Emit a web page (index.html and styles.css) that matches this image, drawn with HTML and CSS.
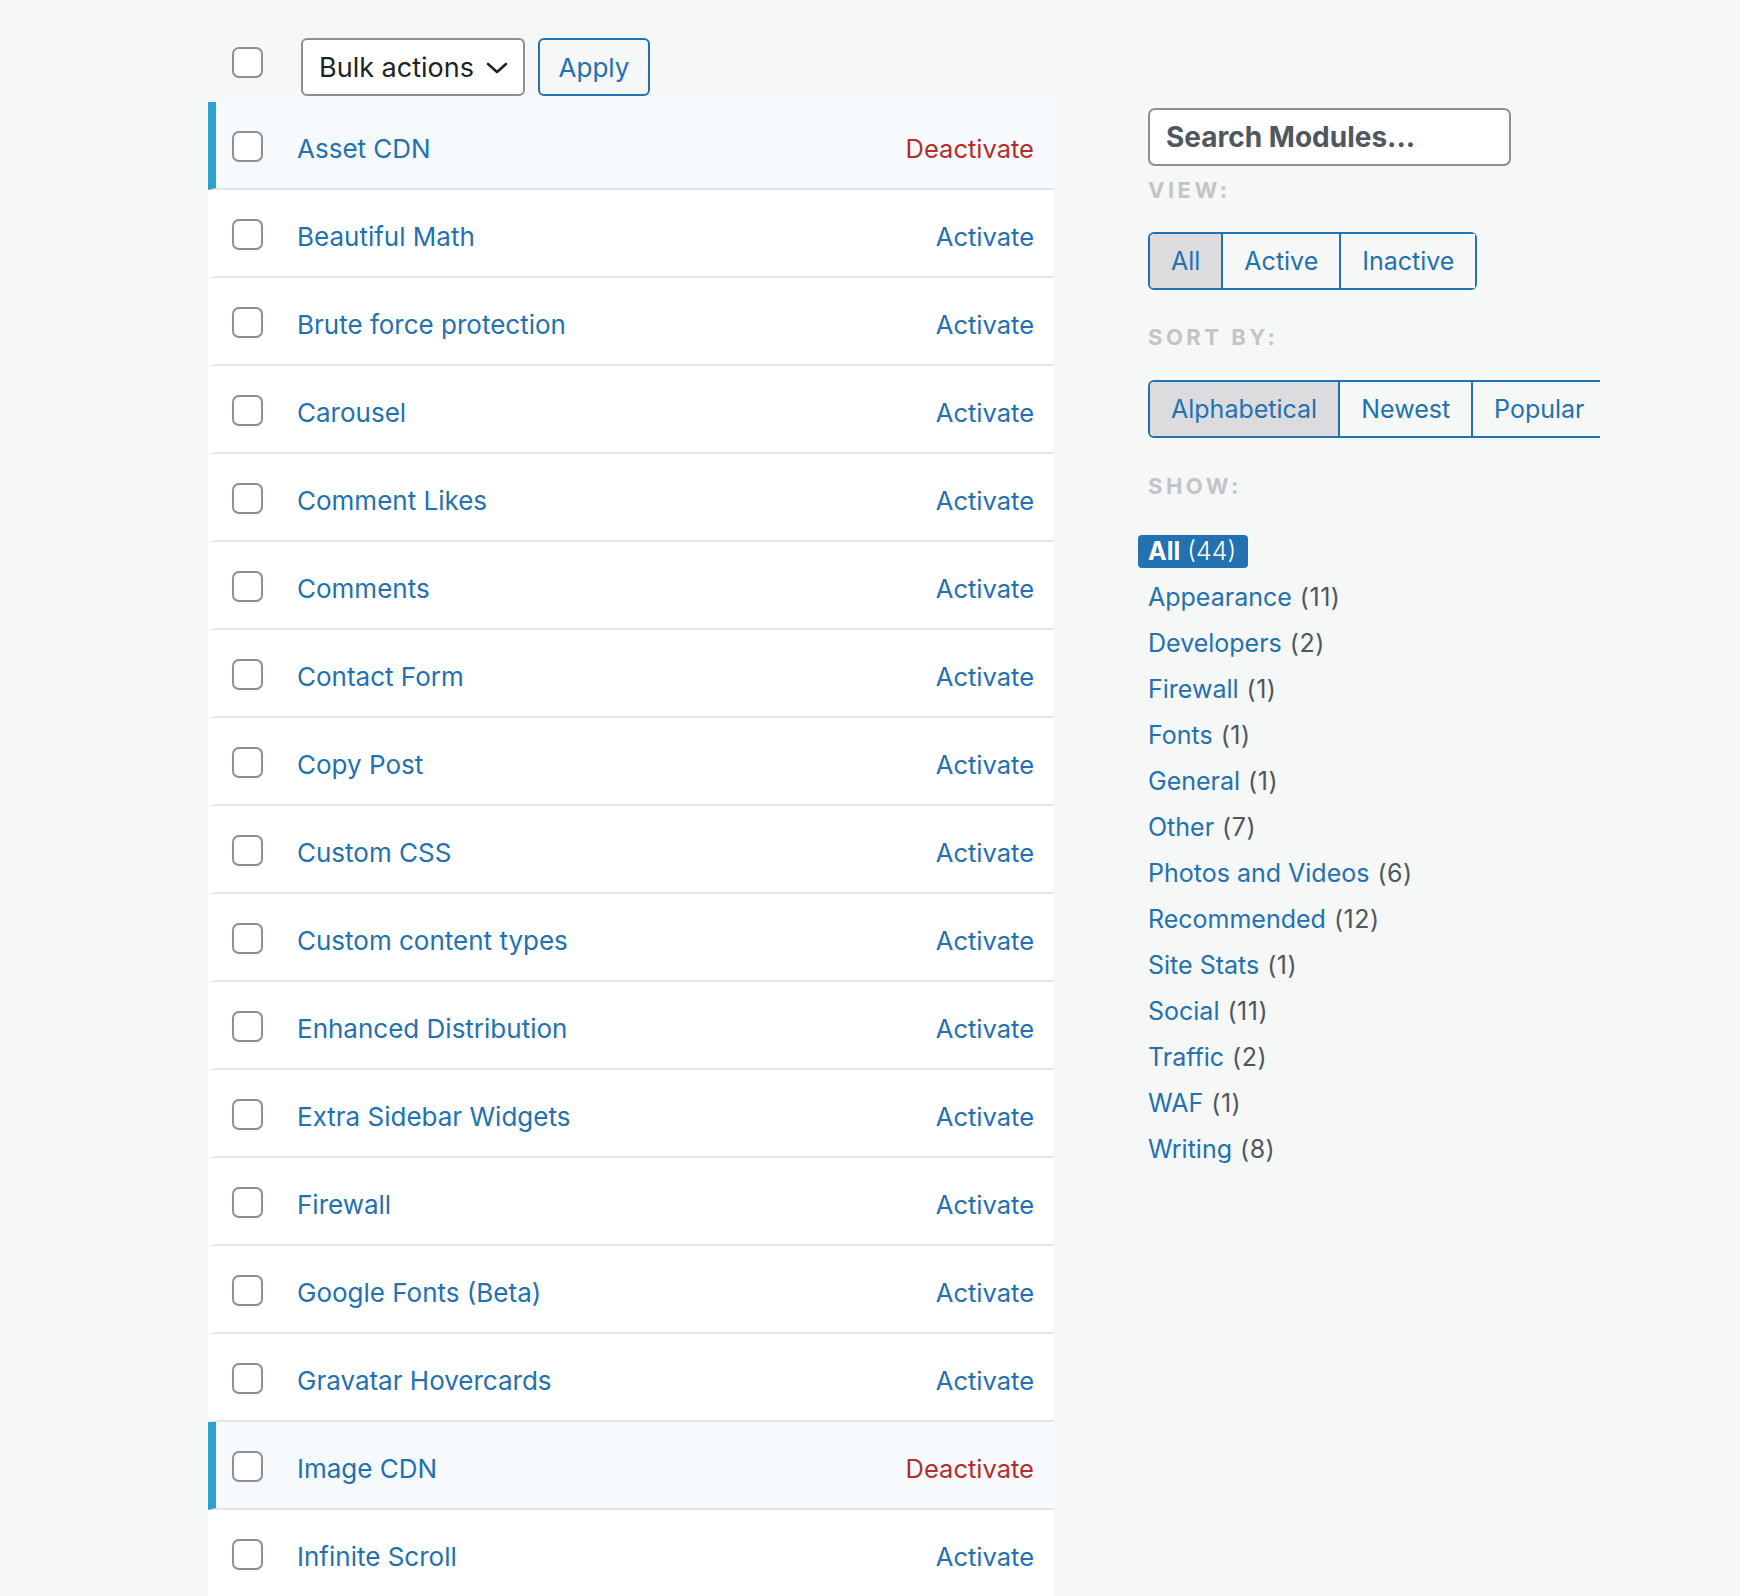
FILE: index.html
```html
<!DOCTYPE html>
<html lang="en">
<head>
<meta charset="utf-8">
<title>Modules</title>
<link rel="stylesheet" href="styles.css">
</head>
<body>
<div class="page">
  <div class="main">
    <div class="toolbar">
      <span class="cb cb-head"></span>
      <div class="select">
        <span>Bulk actions</span>
        <svg class="chev" width="22" height="12" viewBox="0 0 22 12"><path d="M2 2 L11 10 L20 2" fill="none" stroke="#1d2327" stroke-width="2.6" stroke-linecap="round" stroke-linejoin="round"/></svg>
      </div>
      <button class="btn-apply">Apply</button>
    </div>
    <div class="list">
      <div class="row active"><span class="cb"></span><a class="name">Asset CDN</a><a class="act deact">Deactivate</a></div>
      <div class="row"><span class="cb"></span><a class="name">Beautiful Math</a><a class="act">Activate</a></div>
      <div class="row"><span class="cb"></span><a class="name">Brute force protection</a><a class="act">Activate</a></div>
      <div class="row"><span class="cb"></span><a class="name">Carousel</a><a class="act">Activate</a></div>
      <div class="row"><span class="cb"></span><a class="name">Comment Likes</a><a class="act">Activate</a></div>
      <div class="row"><span class="cb"></span><a class="name">Comments</a><a class="act">Activate</a></div>
      <div class="row"><span class="cb"></span><a class="name">Contact Form</a><a class="act">Activate</a></div>
      <div class="row"><span class="cb"></span><a class="name">Copy Post</a><a class="act">Activate</a></div>
      <div class="row"><span class="cb"></span><a class="name">Custom CSS</a><a class="act">Activate</a></div>
      <div class="row"><span class="cb"></span><a class="name">Custom content types</a><a class="act">Activate</a></div>
      <div class="row"><span class="cb"></span><a class="name">Enhanced Distribution</a><a class="act">Activate</a></div>
      <div class="row"><span class="cb"></span><a class="name">Extra Sidebar Widgets</a><a class="act">Activate</a></div>
      <div class="row"><span class="cb"></span><a class="name">Firewall</a><a class="act">Activate</a></div>
      <div class="row"><span class="cb"></span><a class="name">Google Fonts (Beta)</a><a class="act">Activate</a></div>
      <div class="row"><span class="cb"></span><a class="name">Gravatar Hovercards</a><a class="act">Activate</a></div>
      <div class="row active"><span class="cb"></span><a class="name">Image CDN</a><a class="act deact">Deactivate</a></div>
      <div class="row"><span class="cb"></span><a class="name">Infinite Scroll</a><a class="act">Activate</a></div>
    </div>
  </div>
  <aside class="side">
    <div class="search">Search Modules...</div>
    <div class="label label-view">View:</div>
    <div class="group">
      <button class="gbtn sel">All</button>
      <button class="gbtn">Active</button>
      <button class="gbtn">Inactive</button>
    </div>
    <div class="label label-sort">Sort by:</div>
    <div class="group">
      <button class="gbtn sel">Alphabetical</button>
      <button class="gbtn">Newest</button>
      <button class="gbtn">Popular</button>
    </div>
    <div class="label label-show">Show:</div>
    <ul class="cats">
      <li><span class="badge"><b>All</b> <span class="bcount">(44)</span></span></li>
      <li><a>Appearance</a> <span class="count">(11)</span></li>
      <li><a>Developers</a> <span class="count">(2)</span></li>
      <li><a>Firewall</a> <span class="count">(1)</span></li>
      <li><a>Fonts</a> <span class="count">(1)</span></li>
      <li><a>General</a> <span class="count">(1)</span></li>
      <li><a>Other</a> <span class="count">(7)</span></li>
      <li><a>Photos and Videos</a> <span class="count">(6)</span></li>
      <li><a>Recommended</a> <span class="count">(12)</span></li>
      <li><a>Site Stats</a> <span class="count">(1)</span></li>
      <li><a>Social</a> <span class="count">(11)</span></li>
      <li><a>Traffic</a> <span class="count">(2)</span></li>
      <li><a>WAF</a> <span class="count">(1)</span></li>
      <li><a>Writing</a> <span class="count">(8)</span></li>
    </ul>
  </aside>
</div>
</body>
</html>
```
FILE: styles.css
```css
* { box-sizing: border-box; }
html, body { margin: 0; padding: 0; }
body {
  background: #f6f7f7;
  font-family: Inter, "Liberation Sans", sans-serif;
  font-size: 25px;
  color: #1d2327;
  overflow: hidden;
  height: 1596px;
}
.page {
  display: flex;
  padding-left: 208px;
  gap: 84px;
}
.main { width: 846px; flex: none; }

.toolbar {
  display: flex;
  align-items: center;
  height: 58px;
  margin-top: 38px;
  padding-left: 24px;
}
.cb {
  display: inline-block;
  width: 31px;
  height: 31px;
  border: 2px solid #8c8f94;
  border-radius: 7px;
  background: #fff;
  flex: none;
}
.cb-head { align-self: flex-start; margin-top: 9px; }
.select {
  margin-left: 38px;
  width: 224px;
  height: 58px;
  border: 2px solid #8c8f94;
  border-radius: 6px;
  background: #fff;
  display: flex;
  align-items: center;
  justify-content: space-between;
  padding: 0 15px 0 16px;
  font-size: 27px;
  color: #1d2327;
}
.chev { margin-top: 2px; }
.btn-apply {
  margin-left: 13px;
  height: 58px;
  width: 112px;
  border: 2px solid #2271b1;
  border-radius: 6px;
  background: #f6f7f7;
  color: #2271b1;
  font-family: inherit;
  font-size: 26px;
  padding: 0;
}

.list { margin-top: 6px; }
.row {
  height: 88px;
  background: #fff;
  border-left: 8px solid #fff;
  border-bottom: 2px solid #e4e6e8;
  display: flex;
  align-items: center;
  padding: 0 20px 0 16px;
  font-size: 26px;
}
.row .cb { margin-top: 2px; }
.row.active {
  background: #f6fafd;
  border-left-color: #2ea2cc;
}
.name {
  margin-left: 34px;
  color: #2271b1;
  flex: 1;
  padding-top: 7px;
}
.act { color: #2271b1; padding-top: 7px; font-size: 25.5px; }
.act.deact { color: #b32d2e; }

.side {
  width: 462px;
  flex: none;
  overflow: hidden;
  padding-top: 108px;
  padding-left: 10px;
}
.search {
  width: 363px;
  height: 58px;
  border: 2px solid #8c8f94;
  border-radius: 7px;
  background: #fff;
  padding-left: 16px;
  display: flex;
  align-items: center;
  font-weight: 700;
  font-size: 28px;
  color: #50575e;
}
.label {
  height: 30px;
  line-height: 30px;
  font-size: 22px;
  font-weight: 700;
  letter-spacing: 3.5px;
  text-transform: uppercase;
  color: #c3c4c7;
}
.label-view { margin-top: 9px; margin-bottom: 27px; }
.label-sort { margin-top: 32px; margin-bottom: 28px; }
.label-show { margin-top: 33px; margin-bottom: 27px; }

.group {
  display: inline-flex;
  border: 2px solid #2271b1;
  border-radius: 6px;
  white-space: nowrap;
  flex-wrap: nowrap;
}
.gbtn {
  flex: none;
  height: 54px;
  padding: 0 21px;
  border: none;
  border-left: 2px solid #2271b1;
  background: #f6f7f7;
  color: #2271b1;
  font-family: inherit;
  font-size: 25px;
}
.gbtn:first-child { border-left: none; border-radius: 4px 0 0 4px; }
.gbtn.sel { background: #dcdcde; }

.cats {
  list-style: none;
  margin: 0;
  padding: 0;
}
.cats li {
  height: 46px;
  line-height: 46px;
  white-space: nowrap;
}
.cats a { color: #2271b1; }
.count { color: #50575e; margin-left: 1px; letter-spacing: 0.5px; }
.badge {
  display: inline-block;
  margin-left: -10px;
  height: 33px;
  line-height: 33px;
  padding: 0 12px 0 10px;
  background: #2271b1;
  border-radius: 4px;
  color: #fff;
}
.badge b { font-weight: 700; }
.bcount { font-weight: 300; }
```
